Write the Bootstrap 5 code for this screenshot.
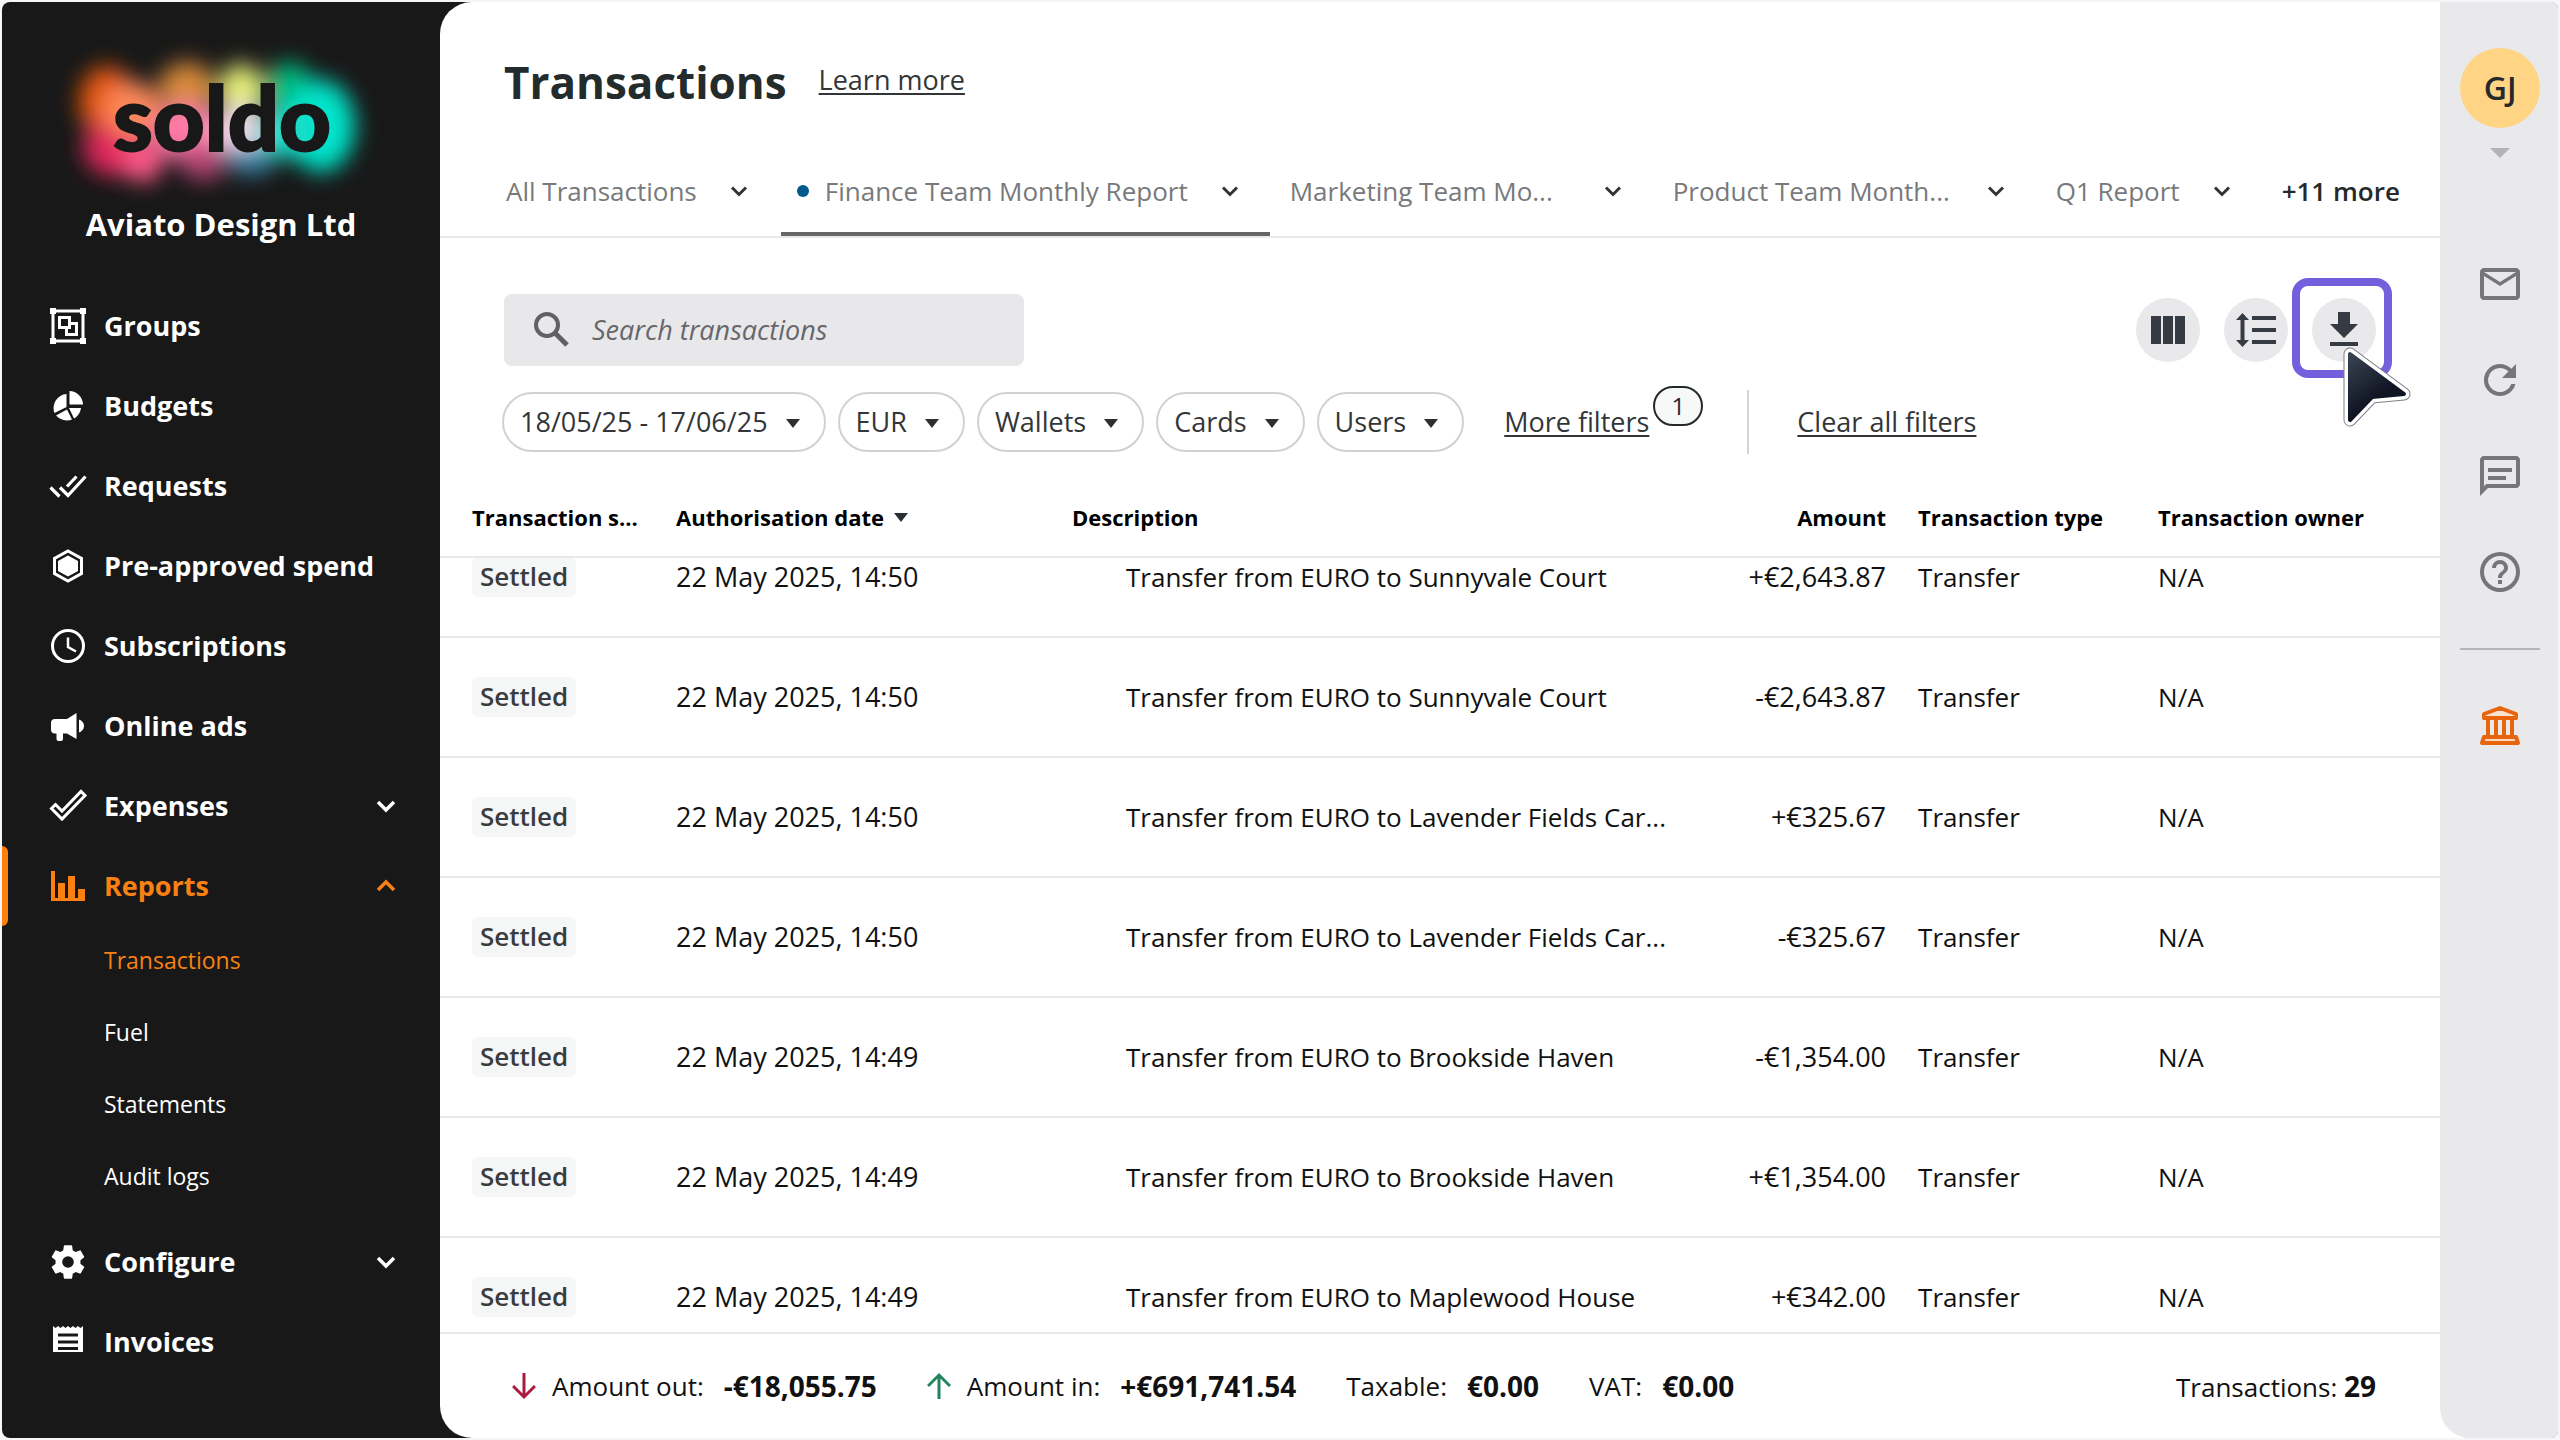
<!DOCTYPE html>
<html lang="en">
<head>
<meta charset="utf-8">
<meta name="viewport" content="width=device-width, initial-scale=1">
<title>Transactions</title>
<link href="https://cdn.jsdelivr.net/npm/bootstrap@5.3.0/dist/css/bootstrap.min.css" rel="stylesheet">
<style>
:root{--ink:#181818;--line:#e8e8ea;--rail:#e9e9eb;--accent:#f98113}
html,body{height:100%}
body{font-family:"Open Sans","Noto Sans",sans-serif;font-size:27px;line-height:36px;color:#111;background:#f5f6f7;padding:2px}
a{color:inherit}
.app-shell{background:var(--ink);border-radius:8px;overflow:hidden;height:100%}
.stage{background:#fff;border-radius:32px 0 0 32px;min-width:0}
/* sidebar */
.side-panel{width:438px;color:#fff}
.brand{height:284px;padding-top:44px}
.brand svg{width:320px;height:150px;display:block}
.wordmark{font-family:Lato,sans-serif;font-weight:900;font-size:90px;fill:#181818;stroke:#181818;stroke-width:2px}
.brand-name{font-size:31px;line-height:44px;margin-top:6px}
.side-link{height:80px;padding:0 34px 0 46px;gap:16px;font-size:27px;font-weight:700;color:#fff;text-decoration:none}
.side-link svg.glyph{width:40px;height:40px;flex:none}
.side-link svg.chev{width:40px;height:40px;margin-left:auto}
.side-link.active{color:var(--accent);position:relative}
.side-link.active::before{content:"";position:absolute;left:0;top:0;bottom:0;width:6px;background:#ff7f0a;border-radius:0 6px 6px 0}
.side-sub{padding-bottom:8px}
.side-sub a{height:72px;padding:0 0 4px 102px;font-size:23px;color:#fff;text-decoration:none}
.side-sub a.active{color:var(--accent)}
/* main */
.work{min-width:0}
.work-head{padding:52px 64px 0;height:144px;gap:32px}
.work-head h1{font-size:44px;line-height:56px;font-weight:700;color:#232b2d}
.text-link{color:#333638;text-underline-offset:3px}
.tabs{height:90px;padding-left:46px;border-bottom:2px solid var(--line);box-sizing:content-box}
.tab{border:0;background:none;height:90px;padding:0 28px 0 20px;gap:30px;color:#77797b;white-space:nowrap;font-size:26px}
.tab svg{width:24px;height:24px;color:#333;flex:none}
.tab.active{margin-left:2px;padding-left:16px;border-bottom:4px solid #666;padding-top:4px}
.tab .clip{width:281px;text-align:left}
.tab .dot{width:12px;height:12px;border-radius:50%;background:#005a8c;margin-right:-14px}
.tab.more{color:#26292b;font-weight:600}
.toolbar{padding:56px 64px 0}
.search{width:520px;height:72px;background:#e8e8ea;border-radius:8px;padding-left:26px;gap:18px}
.search input{border:0;background:none;font-style:italic;outline:0;width:400px;padding:0;color:#65676a}
.search input::placeholder{color:#65676a;opacity:1}
.round-btn{display:block;width:64px;height:64px;border-radius:50%;border:0;background:#e9e9eb;padding:0;color:#363a42}
.round-btn svg{width:48px;height:48px;display:block;margin:auto}
.tools{gap:24px}
.halo{position:absolute;left:-20px;top:-20px;width:100px;height:100px;border:8px solid #755fdc;border-radius:16px}
.cursor{position:absolute;left:28px;top:46px;width:74px;height:88px;z-index:3}
.filters{padding:26px 62px 0;gap:12px;height:112px}
.pill{height:60px;border:2px solid #d0d1d2;border-radius:30px;background:#fff;color:#333638;padding:0 24px 0 16px;white-space:nowrap}
.pill::after,.sort::after,.tri::after{content:"";display:inline-block;border-left:7px solid transparent;border-right:7px solid transparent;border-top:9px solid #2c2f31;margin-left:18px;vertical-align:4px}
.extra{height:60px;margin-left:28px}
.tally{position:absolute;left:100%;top:-18px;margin-left:4px;width:50px;height:40px;border:2px solid #26292b;border-radius:20px;background:#f7f8f8;font-size:24px;line-height:36px;text-align:center;color:#26292b}
.rule{width:2px;height:64px;background:#d4d5d6;margin:0 48px 0 98px}
/* table */
.sheet{overflow:hidden;min-height:0}
.tx{table-layout:fixed;border-collapse:separate;border-spacing:0;width:100%;margin:0}
.tx th,.tx td{padding:0 16px;border-bottom:2px solid var(--line);vertical-align:middle;white-space:nowrap;overflow:hidden}
.tx th:first-child,.tx td:first-child{padding-left:32px}
.tx thead th{position:sticky;top:0;height:80px;background:#fff;font-size:22px;font-weight:700;color:#000}
.tx td{height:120px;font-size:26px}
.tx td.num{font-size:27px}
.tx td.memo{padding-left:70px}
.sort::after{margin-left:10px;vertical-align:4px}
.state{display:inline-block;height:40px;line-height:38px;padding:0 8px;border-radius:6px;background:#f5f6f6;color:#3a3d3f;font-weight:600}
.totals{height:104px;border-top:2px solid var(--line);padding:0 64px 0 72px;gap:50px;box-sizing:content-box;font-size:26px}
.totals .pair{gap:20px}
.totals b{font-size:28px}
.totals svg{width:24px;height:28px;margin-right:-4px}
/* rail */
.rail{width:118px;background:var(--rail);color:#747679;padding:46px 0 0 2px;border-radius:0 0 0 30px}
.avatar{width:80px;height:80px;border-radius:50%;border:0;background:#ffd484;color:#26292b;font-size:32px;font-weight:600;padding:0}
.tri{height:10px;line-height:10px;margin:20px 0 102px}
.tri::after{border-left-width:10px;border-right-width:10px;border-top:10px solid #b2b3b5;margin:0;vertical-align:top}
.rail a{height:48px;margin-bottom:48px;color:inherit}
.rail svg{width:48px;height:48px;display:block}
.rail hr{width:80px;height:2px;background:#b5b6b8;border:0;opacity:1;margin:4px 0 52px}
</style>
</head>
<body>
<svg width="0" height="0" class="position-absolute"><defs>
<symbol id="down" viewBox="0 0 24 24"><path d="M5 8.500l7 7 7-7" fill="none" stroke="currentColor" stroke-width="3"/></symbol>
</defs></svg>
<div class="app-shell d-flex">
  <nav class="side-panel flex-shrink-0 d-flex flex-column" aria-label="Main">
    <div class="brand flex-shrink-0 d-flex flex-column align-items-center">
      <svg viewBox="0 0 320 150" overflow="visible" role="img" aria-label="soldo">
        <defs><filter id="glow" x="-30%" y="-30%" width="160%" height="160%"><feGaussianBlur stdDeviation="11"/></filter></defs>
        <g filter="url(#glow)">
          <ellipse cx="46" cy="56" rx="28" ry="36" fill="#e8590c"/>
          <ellipse cx="54" cy="102" rx="32" ry="28" fill="#e0285c"/>
          <ellipse cx="82" cy="116" rx="20" ry="20" fill="#ff5a8a"/>
          <ellipse cx="72" cy="64" rx="28" ry="28" fill="#ff8a5c"/>
          <ellipse cx="126" cy="42" rx="28" ry="26" fill="#d98a3a"/>
          <ellipse cx="126" cy="86" rx="36" ry="28" fill="#ff7aa8"/>
          <ellipse cx="142" cy="116" rx="22" ry="18" fill="#b84474"/>
          <ellipse cx="180" cy="44" rx="22" ry="26" fill="#e8f27a"/>
          <ellipse cx="178" cy="84" rx="24" ry="26" fill="#f0dcec"/>
          <ellipse cx="190" cy="114" rx="24" ry="14" fill="#3a8ab0"/>
          <ellipse cx="228" cy="42" rx="24" ry="26" fill="#00b87a"/>
          <ellipse cx="260" cy="80" rx="34" ry="46" fill="#00e6cc"/>
          <ellipse cx="226" cy="86" rx="28" ry="26" fill="#19dcc8"/>
        </g>
        <text class="wordmark" x="161" y="105" text-anchor="middle">soldo</text>
      </svg>
      <div class="brand-name fw-bold">Aviato Design Ltd</div>
    </div>
    <a class="side-link d-flex align-items-center" href="#"><svg class="glyph" viewBox="0 0 40 40" fill="none" stroke="#fff"><path d="M5 5h30v30H5z" stroke-width="3"/><path d="M2 2h6v6H2zM32 2h6v6h-6zM2 32h6v6H2zM32 32h6v6h-6z" fill="#fff" stroke="none"/><path d="M11.500 11.500h10v10h-10zM21.500 17.500h7v11h-10v-7" stroke-width="3"/></svg>Groups</a>
    <a class="side-link d-flex align-items-center" href="#"><svg class="glyph" viewBox="0 0 40 40" fill="#fff"><path d="M21.500 18.500V5A14 14 0 0 1 35 18.500zM18.500 8v13L6.500 27A14 14 0 0 1 18.500 8zM8 29.500L19 23.500 24 33.500A14 14 0 0 1 8 29.500zM26 32.500L21 22H33A14 14 0 0 1 26 32.500z"/></svg>Budgets</a>
    <a class="side-link d-flex align-items-center" href="#"><svg class="glyph" viewBox="0 0 40 40" fill="none" stroke="#fff" stroke-width="3.200"><path d="M2.500 21.500l9 9M12 21.500l8 8L37.500 10.500M19 20.500L28.500 10.500"/></svg>Requests</a>
    <a class="side-link d-flex align-items-center" href="#"><svg class="glyph" viewBox="0 0 40 40"><path d="M20 5l13.500 7.500v15L20 35 6.500 27.500v-15z" fill="none" stroke="#fff" stroke-width="3"/><path d="M20 9.500l10 5.500v10l-10 5.500L10 25V15z" fill="#fff"/></svg>Pre-approved spend</a>
    <a class="side-link d-flex align-items-center" href="#"><svg class="glyph" viewBox="0 0 40 40" fill="none" stroke="#fff"><circle cx="20" cy="20" r="15.500" stroke-width="3"/><path d="M20 11.500V21l8 4.500" stroke-width="2.500"/></svg>Subscriptions</a>
    <a class="side-link d-flex align-items-center" href="#"><svg class="glyph" viewBox="0 0 40 40" fill="#fff"><path d="M7 13h12l9.500-6v26L19 27.500h-4V33a2 2 0 0 1-2 2h-2.500a2 2 0 0 1-2-2v-5.500H7a4 4 0 0 1-4-4V17a4 4 0 0 1 4-4zM31 13.500c3 1 5 3.500 5 6.500s-2 5.500-5 6.500z"/></svg>Online ads</a>
    <a class="side-link d-flex align-items-center" href="#"><svg class="glyph" viewBox="0 0 40 40" fill="none" stroke="#fff" stroke-width="3"><path d="M3.500 22.500l4-4 6.500 6.500L33 5.500l4 4L14 33z"/></svg>Expenses<svg class="chev" viewBox="0 0 40 40"><path d="M12 16l8 8 8-8" fill="none" stroke="#fff" stroke-width="3.500"/></svg></a>
    <a class="side-link active d-flex align-items-center" href="#"><svg class="glyph" viewBox="0 0 40 40" fill="#f98113"><path d="M3 5h4v27h3V17h7v15h3V10h7v22h3v-9h7v12H3z"/></svg>Reports<svg class="chev" viewBox="0 0 40 40"><path d="M12 24l8-8 8 8" fill="none" stroke="#f98113" stroke-width="3.500"/></svg></a>
    <div class="side-sub d-flex flex-column">
      <a class="active d-flex align-items-center" href="#">Transactions</a>
      <a class="d-flex align-items-center" href="#">Fuel</a>
      <a class="d-flex align-items-center" href="#">Statements</a>
      <a class="d-flex align-items-center" href="#">Audit logs</a>
    </div>
    <a class="side-link d-flex align-items-center" href="#"><svg class="glyph" viewBox="0 0 24 24" fill="#fff"><path d="M19.430 12.980c.04-.32.070-.64.070-.98s-.03-.66-.07-.98l2.110-1.650c.19-.15.240-.42.120-.64l-2-3.460c-.12-.22-.39-.3-.61-.22l-2.490 1c-.52-.4-1.080-.73-1.690-.98l-.38-2.650A.49.490 0 0 0 14 2h-4c-.25 0-.46.180-.49.420l-.38 2.650c-.61.250-1.170.590-1.690.980l-2.490-1c-.23-.09-.49 0-.61.220l-2 3.460c-.13.220-.07.490.120.640l2.110 1.650c-.04.320-.07.650-.07.980s.03.660.070.980l-2.110 1.650c-.19.150-.24.420-.12.640l2 3.460c.12.220.390.300.61.220l2.490-1c.52.400 1.080.730 1.690.980l.38 2.650c.03.240.240.420.49.420h4c.25 0 .46-.18.49-.42l.38-2.650c.61-.25 1.170-.59 1.690-.98l2.490 1c.23.090.490 0 .61-.22l2-3.460c.12-.22.070-.49-.12-.64zM12 15.500A3.500 3.500 0 1 1 12 8.500a3.500 3.500 0 0 1 0 7z"/></svg>Configure<svg class="chev" viewBox="0 0 40 40"><path d="M12 16l8 8 8-8" fill="none" stroke="#fff" stroke-width="3.500"/></svg></a>
    <a class="side-link d-flex align-items-center" href="#"><svg class="glyph" viewBox="0 0 40 40"><path d="M5 4l2.500 2L10 4l2.500 2L15 4l2.500 2L20 4l2.500 2L25 4l2.500 2L30 4l2.500 2L35 4v26H5z" fill="#fff"/><path d="M10 13h20M10 20h20M10 26.500h20" stroke="#181818" stroke-width="3"/></svg>Invoices</a>
  </nav>

  <div class="stage flex-grow-1 d-flex">
  <main class="work flex-grow-1 d-flex flex-column">
    <header class="work-head flex-shrink-0 d-flex align-items-start">
      <h1 class="m-0">Transactions</h1>
      <a class="text-link mt-2" href="#">Learn more</a>
    </header>
    <div class="tabs flex-shrink-0 d-flex" role="tablist">
      <button class="tab d-flex align-items-center" role="tab">All Transactions<svg><use href="#down"/></svg></button>
      <button class="tab active d-flex align-items-center" role="tab" aria-selected="true"><span class="dot"></span>Finance Team Monthly Report<svg><use href="#down"/></svg></button>
      <button class="tab d-flex align-items-center" role="tab"><span class="clip">Marketing Team Mo...</span><svg><use href="#down"/></svg></button>
      <button class="tab d-flex align-items-center" role="tab"><span class="clip">Product Team Month...</span><svg><use href="#down"/></svg></button>
      <button class="tab d-flex align-items-center" role="tab">Q1 Report<svg><use href="#down"/></svg></button>
      <button class="tab more d-flex align-items-center">+11 more</button>
    </div>
    <div class="toolbar flex-shrink-0 d-flex justify-content-between align-items-center">
      <label class="search d-flex align-items-center">
        <svg width="44" height="44" viewBox="0 0 44 44" fill="none" stroke="#5f6164"><circle cx="17" cy="17" r="11" stroke-width="4"/><path d="M25 25l12 12" stroke-width="5"/></svg>
        <input type="search" placeholder="Search transactions" aria-label="Search transactions">
      </label>
      <div class="tools d-flex">
        <button class="round-btn" aria-label="Columns"><svg viewBox="0 0 48 48" fill="currentColor"><path d="M7 10h10v28H7zM19 10h10v28H19zM31 10h10v28H31z"/></svg></button>
        <button class="round-btn" aria-label="Row height"><svg viewBox="0 0 48 48" fill="currentColor"><path d="M10.500 7l6.500 7h-4.500v20H17l-6.500 7L4 34h4.500V14H4zM20 10h24v4H20zM20 22h24v4H20zM20 34h24v4H20z"/></svg></button>
        <div class="position-relative">
          <button class="round-btn" aria-label="Download"><svg viewBox="0 0 48 48" fill="currentColor"><path d="M18 6h12v12h8L24 32 10 18h8zM10 36h28v4H10z"/></svg></button>
          <span class="halo"></span>
          <svg class="cursor" viewBox="0 0 74 88"><defs><linearGradient id="cg" x1="0" y1="0" x2=".6" y2="1"><stop offset="0" stop-color="#3a4452"/><stop offset=".7" stop-color="#101524"/></linearGradient></defs><g stroke-linejoin="round"><path d="M10 10v66l22-23 32-3z" fill="#7d7f84" stroke="#7d7f84" stroke-width="13"/><path d="M10 10v66l22-23 32-3z" fill="#fff" stroke="#fff" stroke-width="11"/><path d="M10 10v66l22-23 32-3z" fill="url(#cg)" stroke="url(#cg)" stroke-width="4"/></g></svg>
        </div>
      </div>
    </div>
    <div class="filters flex-shrink-0 d-flex align-items-start">
      <button class="pill">18/05/25 - 17/06/25</button>
      <button class="pill">EUR</button>
      <button class="pill">Wallets</button>
      <button class="pill">Cards</button>
      <button class="pill">Users</button>
      <div class="extra d-flex align-items-center">
        <a class="text-link position-relative" href="#">More filters<span class="tally">1</span></a>
        <span class="rule"></span>
        <a class="text-link" href="#">Clear all filters</a>
      </div>
    </div>
    <div class="sheet flex-grow-1">
      <table class="tx">
        <colgroup><col style="width:220px"><col style="width:396px"><col><col style="width:212px"><col style="width:240px"><col style="width:298px"></colgroup>
        <thead><tr><th>Transaction s...</th><th><span class="sort">Authorisation date</span></th><th>Description</th><th class="text-end">Amount</th><th>Transaction type</th><th>Transaction owner</th></tr></thead>
        <tbody>
          <tr><td><span class="state">Settled</span></td><td class="num">22 May 2025, 14:50</td><td class="memo">Transfer from EURO to Sunnyvale Court</td><td class="num text-end">+€2,643.87</td><td>Transfer</td><td>N/A</td></tr>
          <tr><td><span class="state">Settled</span></td><td class="num">22 May 2025, 14:50</td><td class="memo">Transfer from EURO to Sunnyvale Court</td><td class="num text-end">-€2,643.87</td><td>Transfer</td><td>N/A</td></tr>
          <tr><td><span class="state">Settled</span></td><td class="num">22 May 2025, 14:50</td><td class="memo">Transfer from EURO to Lavender Fields Car...</td><td class="num text-end">+€325.67</td><td>Transfer</td><td>N/A</td></tr>
          <tr><td><span class="state">Settled</span></td><td class="num">22 May 2025, 14:50</td><td class="memo">Transfer from EURO to Lavender Fields Car...</td><td class="num text-end">-€325.67</td><td>Transfer</td><td>N/A</td></tr>
          <tr><td><span class="state">Settled</span></td><td class="num">22 May 2025, 14:49</td><td class="memo">Transfer from EURO to Brookside Haven</td><td class="num text-end">-€1,354.00</td><td>Transfer</td><td>N/A</td></tr>
          <tr><td><span class="state">Settled</span></td><td class="num">22 May 2025, 14:49</td><td class="memo">Transfer from EURO to Brookside Haven</td><td class="num text-end">+€1,354.00</td><td>Transfer</td><td>N/A</td></tr>
          <tr><td><span class="state">Settled</span></td><td class="num">22 May 2025, 14:49</td><td class="memo">Transfer from EURO to Maplewood House</td><td class="num text-end">+€342.00</td><td>Transfer</td><td>N/A</td></tr>
        </tbody>
      </table>
    </div>
    <footer class="totals flex-shrink-0 d-flex align-items-center">
      <div class="pair d-flex align-items-center"><svg viewBox="0 0 24 28" fill="none" stroke="#ab1a3f" stroke-width="3"><path d="M12 1v24M1 14l11 11 11-11"/></svg><span>Amount out:</span><b>-€18,055.75</b></div>
      <div class="pair d-flex align-items-center"><svg viewBox="0 0 24 28" fill="none" stroke="#238460" stroke-width="3"><path d="M12 27V3M1 14L12 3l11 11"/></svg><span>Amount in:</span><b>+€691,741.54</b></div>
      <div class="pair d-flex align-items-center"><span>Taxable:</span><b>€0.00</b></div>
      <div class="pair d-flex align-items-center"><span>VAT:</span><b>€0.00</b></div>
      <div class="ms-auto">Transactions: <b>29</b></div>
    </footer>
  </main>

  <aside class="rail flex-shrink-0 d-flex flex-column align-items-center">
    <button class="avatar">GJ</button>
    <div class="tri"></div>
    <a href="#" aria-label="Messages"><svg viewBox="0 0 24 24" fill="currentColor"><path d="M22 6c0-1.100-.9-2-2-2H4c-1.100 0-2 .9-2 2v12c0 1.100.9 2 2 2h16c1.100 0 2-.9 2-2zm-2 0l-8 5-8-5zm0 12H4V8l8 5 8-5z"/></svg></a>
    <a href="#" aria-label="Refresh"><svg viewBox="0 0 24 24" fill="currentColor"><path d="M17.650 6.350A7.960 7.960 0 0 0 12 4a8 8 0 1 0 7.730 10h-2.080A6 6 0 1 1 12 6c1.660 0 3.140.690 4.220 1.780L13 11h7V4z"/></svg></a>
    <a href="#" aria-label="Chat"><svg viewBox="0 0 24 24" fill="currentColor"><path d="M4 4h16v12H5.170L4 17.170zm0-2c-1.100 0-2 .9-2 2v18l4-4h14c1.100 0 2-.9 2-2V4c0-1.100-.9-2-2-2zm2 10h9v2H6zm0-4h12v2H6z"/></svg></a>
    <a href="#" aria-label="Help"><svg viewBox="0 0 24 24" fill="currentColor"><path d="M11 18h2v-2h-2zm1-16a10 10 0 1 0 0 20 10 10 0 0 0 0-20zm0 18a8 8 0 1 1 0-16 8 8 0 0 1 0 16zm0-14a4 4 0 0 0-4 4h2a2 2 0 1 1 4 0c0 2-3 1.750-3 5h2c0-2.250 3-2.500 3-5a4 4 0 0 0-4-4z"/></svg></a>
    <hr>
    <a href="#" aria-label="Bank"><svg viewBox="0 0 48 48" fill="none" stroke="#e8650e" stroke-width="4" stroke-linejoin="round"><path d="M8 12l16-6 16 6v4H8z" fill="#fbe3d2"/><path d="M12 17v17M20 17v17M28 17v17M36 17v17"/><path d="M8 35h32l2 6H6z" fill="#fbd9c0"/></svg></a>
  </aside>
  </div>
</div>
<script src="https://cdn.jsdelivr.net/npm/bootstrap@5.3.0/dist/js/bootstrap.bundle.min.js"></script>
<script>document.querySelector('.sheet').scrollTop = 40;</script>
</body>
</html>
